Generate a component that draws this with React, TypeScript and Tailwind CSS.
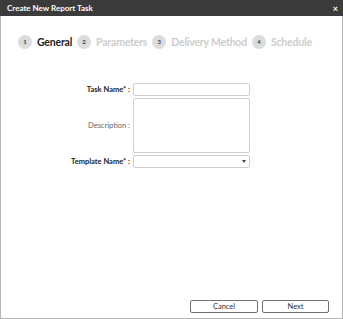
import React from 'react';

const steps = [
  { n: 1, name: 'General', active: true },
  { n: 2, name: 'Parameters', active: false },
  { n: 3, name: 'Delivery Method', active: false },
  { n: 4, name: 'Schedule', active: false },
];

export default function App() {
  return (
    <div
      className="w-[343px] h-[319px] flex flex-col bg-white"
      style={{ fontFamily: 'Lato, "Liberation Sans", sans-serif' }}
    >
      {/* Title bar */}
      <div className="h-[16px] shrink-0 bg-[#3b3b3b] flex items-center justify-between pl-[7px] pr-[5px]">
        <span className="text-[8px] font-bold text-white leading-none">Create New Report Task</span>
        <span className="text-[9px] font-bold text-white leading-none">×</span>
      </div>

      <div className="flex-1 flex flex-col border-x border-b border-[#b5b5b5]">
        {/* Steps */}
        <div className="flex items-center pl-[17px] pt-[19px] whitespace-nowrap">
          {steps.map((s) => (
            <div key={s.n} className="flex items-center gap-[5px] mr-[5px]">
              <div className="w-[14px] h-[14px] rounded-full bg-[#dcdcdc] flex items-center justify-center text-[6px] font-bold text-[#444] leading-none">
                {s.n}
              </div>
              <span
                className={`text-[10.5px] font-bold leading-none tracking-[-0.2px] ${
                  s.active ? 'text-[#222]' : 'text-[#cdcdcd]'
                }`}
              >
                {s.name}
              </span>
            </div>
          ))}
        </div>

        {/* Form */}
        <div className="grid grid-cols-[129px_117px] gap-x-[3px] gap-y-[2px] mt-[34px] items-center text-[7.5px] whitespace-nowrap">
          <span className="text-right font-bold text-[#222]">Task Name* :</span>
          <div className="h-[13px] border border-[#cfcfcf] rounded-[2px]" />
          <span className="text-right text-[#666]">Description :</span>
          <div className="h-[55px] border border-[#cfcfcf] rounded-[2px]" />
          <span className="text-right font-bold text-[#222]">Template Name* :</span>
          <div className="h-[13px] border border-[#cfcfcf] rounded-[2px] flex items-center justify-end pr-[3px]">
            <svg width="4" height="3" viewBox="0 0 4 3">
              <path d="M0 0 H4 L2 3 Z" fill="#444" />
            </svg>
          </div>
        </div>

        {/* Footer buttons */}
        <div className="mt-auto flex justify-end gap-[4px] pr-[13px] pb-[5px]">
          <button className="w-[68px] h-[13px] border border-[#707070] rounded-[2px] text-[7.5px] text-[#333] leading-none bg-white">
            Cancel
          </button>
          <button className="w-[67px] h-[13px] border border-[#707070] rounded-[2px] text-[7.5px] text-[#333] leading-none bg-white">
            Next
          </button>
        </div>
      </div>
    </div>
  );
}
